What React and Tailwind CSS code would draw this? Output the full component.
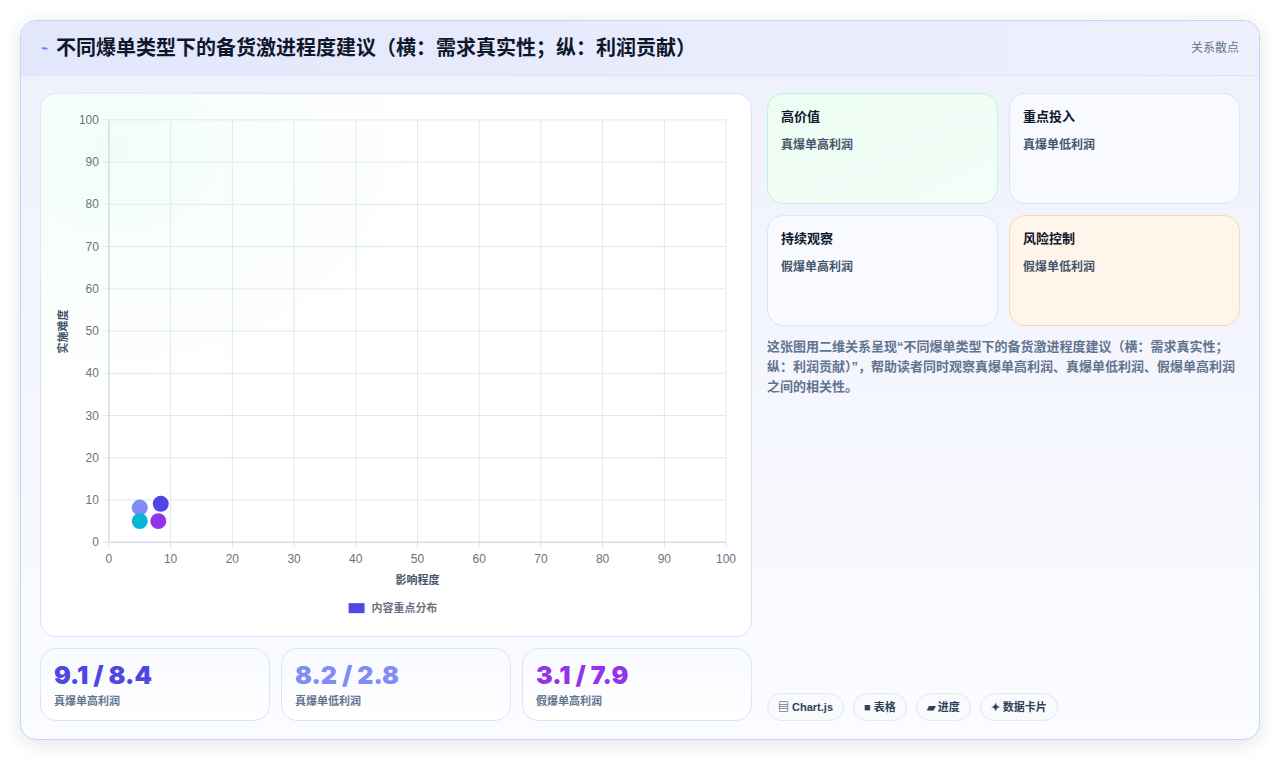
const pts = [
  { x: 5, y: 8.2, c: "#818cf8" },
  { x: 8.4, y: 9.1, c: "#4f46e5" },
  { x: 5, y: 5, c: "#06b6d4" },
  { x: 8, y: 5, c: "#9333ea" },
];

function Chart() {
  const L = 68, R = 686, T = 25, B = 448;
  const sx = (v) => L + ((R - L) * v) / 100;
  const sy = (v) => B - ((B - T) * v) / 100;
  const ticks = [0, 10, 20, 30, 40, 50, 60, 70, 80, 90, 100];
  return (
    <svg viewBox="0 0 711 541" className="w-full h-full" style={{ fontFamily: "Liberation Sans, Noto Sans CJK SC, sans-serif" }}>
      <defs>
        <radialGradient id="g" cx="0.1" cy="0.1" r="0.6">
          <stop offset="0" stopColor="#f0fdf7" />
          <stop offset="1" stopColor="#ffffff" stopOpacity="0" />
        </radialGradient>
      </defs>
      <rect x="0" y="0" width="711" height="541" fill="url(#g)" />
      {ticks.map((t) => (
        <g key={t}>
          <line x1={sx(t)} x2={sx(t)} y1={T} y2={B + 6} stroke="#e2e8f0" />
          <line x1={L - 6} x2={R} y1={sy(t)} y2={sy(t)} stroke="#e2e8f0" />
          <text x={sx(t)} y={B + 21} fontSize="12" fill="#6b7280" textAnchor="middle">{t}</text>
          <text x={L - 10} y={sy(t) + 4} fontSize="12" fill="#6b7280" textAnchor="end">{t}</text>
        </g>
      ))}
      <line x1={L} x2={L} y1={T} y2={B} stroke="#cbd5e1" />
      <line x1={L} x2={R} y1={B} y2={B} stroke="#cbd5e1" />
      {pts.map((p, i) => (
        <circle key={i} cx={sx(p.x)} cy={sy(p.y)} r="8" fill={p.c} />
      ))}
      <text x="377" y="490" fontSize="11" fontWeight="700" fill="#475569" textAnchor="middle">影响程度</text>
      <text x="0" y="0" fontSize="11" fontWeight="700" fill="#475569" textAnchor="middle" transform="translate(26 237) rotate(-90)">实施难度</text>
      <rect x="308" y="509" width="16" height="10" fill="#4f46e5" />
      <text x="331" y="518" fontSize="11" fontWeight="700" fill="#6b7280">内容重点分布</text>
    </svg>
  );
}

function Quad({ title, sub, cls }) {
  return (
    <div className={`rounded-2xl border p-[13px] h-[111px] ${cls}`}>
      <div className="text-[13px] font-bold text-slate-900">{title}</div>
      <div className="text-[12px] font-bold text-slate-600 mt-[9px]">{sub}</div>
    </div>
  );
}

function Stat({ v, l, c }) {
  return (
    <div className="flex-1 rounded-2xl border border-[#dbe4fb] bg-gradient-to-b from-[#f8faff] to-white px-[13px] pt-[12px] h-[73px]">
      <div className={`text-[25px] font-black leading-[28px] ${c}`} style={{ fontFamily: "Inter, sans-serif" }}>{v}</div>
      <div className="text-[11px] font-bold text-slate-500 mt-[4px]">{l}</div>
    </div>
  );
}

export default function App() {
  return (
    <div className="w-[1280px] h-[761px] bg-white p-[20px] pb-[21px]" style={{ fontFamily: "Liberation Sans, Noto Sans CJK SC, sans-serif" }}>
      <div className="h-full rounded-[16px] border border-[#c7d2fe] bg-gradient-to-b from-[#eef0fd] to-[#fbfcff] shadow-[0_4px_18px_rgba(30,41,59,0.12)] overflow-hidden flex flex-col">
        <div className="h-[55px] shrink-0 flex items-center justify-between px-[20px] bg-gradient-to-r from-[#e3e7fc] to-[#eef0fd] border-b border-[#dfe4fa]">
          <div className="flex items-center gap-[8px]">
            <span className="text-[#6366f1] text-[12px]">⌁</span>
            <span className="text-[20px] font-bold text-slate-900">不同爆单类型下的备货激进程度建议（横：需求真实性；纵：利润贡献）</span>
          </div>
          <span className="text-[12px] text-slate-500">关系散点</span>
        </div>
        <div className="flex-1 flex gap-[15px] px-[19px] pt-[17px] pb-[18px]">
          <div className="w-[712px] flex flex-col gap-[11px]">
            <div className="h-[544px] rounded-2xl border border-[#dbe4fb] bg-white overflow-hidden">
              <Chart />
            </div>
            <div className="flex gap-[11px]">
              <Stat v="9.1 / 8.4" l="真爆单高利润" c="text-[#4f46e5]" />
              <Stat v="8.2 / 2.8" l="真爆单低利润" c="text-[#818cf8]" />
              <Stat v="3.1 / 7.9" l="假爆单高利润" c="text-[#9333ea]" />
            </div>
          </div>
          <div className="flex-1 flex flex-col">
            <div className="grid grid-cols-2 gap-[11px]">
              <Quad title="高价值" sub="真爆单高利润" cls="border-[#bbf7d0] bg-gradient-to-br from-[#ecfdf3] to-[#f5fdf8]" />
              <Quad title="重点投入" sub="真爆单低利润" cls="border-[#dbe4fb] bg-[#f8faff]" />
              <Quad title="持续观察" sub="假爆单高利润" cls="border-[#dbe4fb] bg-[#f8faff]" />
              <Quad title="风险控制" sub="假爆单低利润" cls="border-[#fcd9a8] bg-[#fff5ea]" />
            </div>
            <p className="mt-[11px] text-[13px] font-bold leading-[20px] text-slate-500">
              这张图用二维关系呈现“不同爆单类型下的备货激进程度建议（横：需求真实性；纵：利润贡献）”，帮助读者同时观察真爆单高利润、真爆单低利润、假爆单高利润之间的相关性。
            </p>
            <div className="mt-auto flex gap-[9px]">
              {["▤ Chart.js", "■ 表格", "▰ 进度", "✦ 数据卡片"].map((t) => (
                <span key={t} className="h-[28px] px-[10px] flex items-center rounded-full border border-[#e2e8f0] bg-[#f8fafc] text-[11px] font-bold text-slate-700">{t}</span>
              ))}
            </div>
          </div>
        </div>
      </div>
    </div>
  );
}
